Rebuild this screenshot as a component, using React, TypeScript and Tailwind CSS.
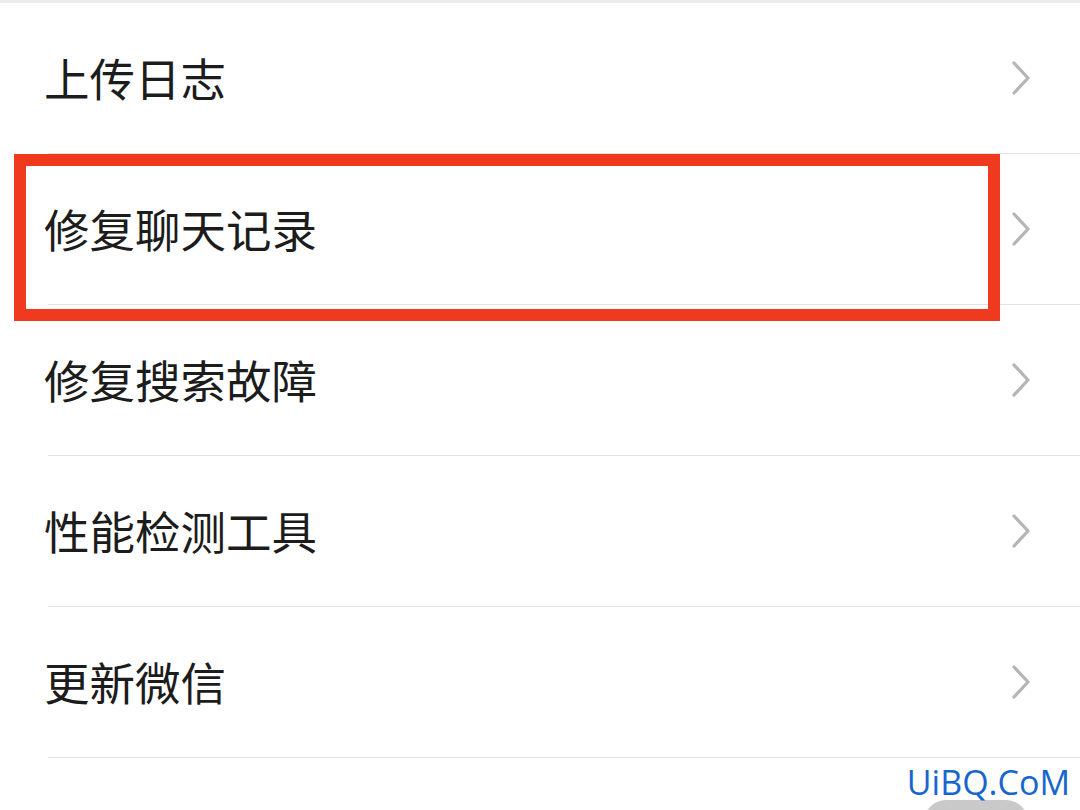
const rows = ["上传日志", "修复聊天记录", "修复搜索故障", "性能检测工具", "更新微信"];

function Chevron() {
  return (
    <svg width="20" height="34" viewBox="0 0 20 34" fill="none" className="shrink-0">
      <path d="M3 2 L17 17 L3 32" stroke="#b5b5b5" strokeWidth="3.2" strokeLinecap="round" strokeLinejoin="round" />
    </svg>
  );
}

export default function App() {
  return (
    <div
      className="relative h-[810px] w-[1080px] overflow-hidden bg-white"
      style={{ fontFamily: '"Noto Sans CJK SC", "Noto Sans", sans-serif' }}
    >
      <div className="h-[3px] bg-[#ececec]" />
      {rows.map((label) => (
        <div key={label} className="pl-[46px]">
          <div className="-ml-[2px] flex h-[150px] items-center justify-between pr-[49px]">
            <span className="text-[45.5px] leading-none text-[#1c1c1c]">{label}</span>
            <Chevron />
          </div>
          <div className="ml-[2px] h-px bg-[#e2e2e2]" />
        </div>
      ))}

      <div className="flex justify-end pr-[52px] pt-[42px]">
        <div className="h-[44px] w-[104px] rounded-full bg-[#c9c9c9]" />
      </div>

      <div className="pointer-events-none absolute left-[14px] top-[154px] h-[167px] w-[986px] border-[12px] border-[#ef3a1f]" />

      <div
        className="absolute right-[10px] top-[765px] text-[34px] leading-none text-[#1766cc]"
        style={{ fontFamily: '"Open Sans", "Liberation Sans", sans-serif' }}
      >
        UiBQ.CoM
      </div>
    </div>
  );
}
